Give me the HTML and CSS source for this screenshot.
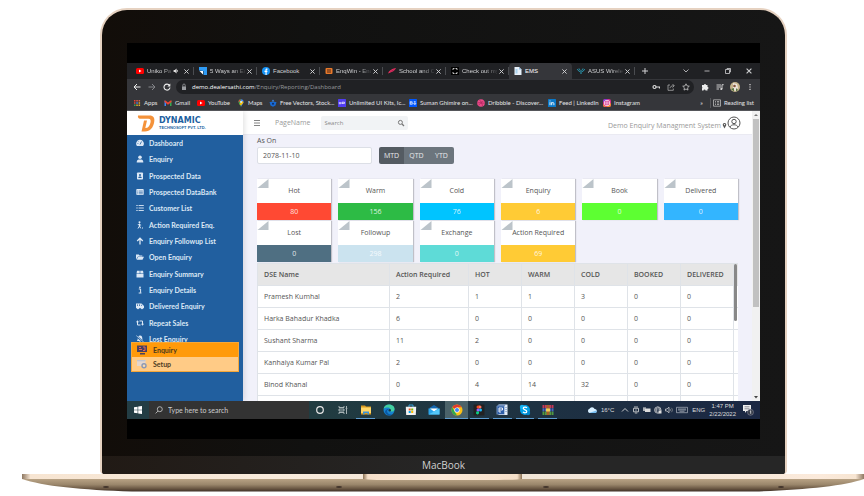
FILE: index.html
```html
<!DOCTYPE html>
<html lang="en">
<head>
<meta charset="utf-8">
<meta name="viewport" content="width=device-width, initial-scale=1">
<title>EMS</title>
<link rel="stylesheet" href="styles.css">
</head>
<body>
<svg class="sprite" aria-hidden="true">
  <symbol id="close" viewBox="0 0 8 8"><path d="M1.6 1.6l4.8 4.8M6.4 1.6L1.6 6.4" stroke="currentColor" stroke-width="1.1" fill="none"/></symbol>
  <symbol id="youtube" viewBox="0 0 16 12"><rect width="16" height="12" rx="3" fill="#f00"/><path d="M6 3l5 3-5 3z" fill="#fff"/></symbol>
  <symbol id="corner" viewBox="0 0 11 9"><path d="M0 9L11 0v9z" fill="#bcc4ca"/></symbol>
</svg>

<main class="laptop">
  <div class="lid">
    <div class="bezel">
      <div class="screen">

        <div class="tabs">
          <div class="tab"><svg class="fav" viewBox="0 0 16 16"><rect y="2" width="16" height="12" rx="3" fill="#f00"/><path d="M6 5l5 3-5 3z" fill="#fff"/></svg><span class="title">Uniko Pa</span><svg class="mute" viewBox="0 0 10 10"><path d="M1 3.500h2L6 1v8L3 6.500H1zM7 3c2 1 2 3 0 4" fill="#ddd"/></svg><svg class="x"><use href="#close"/></svg></div>
          <div class="tab"><svg class="fav" viewBox="0 0 16 16"><path d="M0 0h16v16H9V8L0 7z" fill="#2f9bf4"/><path d="M1 8h7v7z" fill="#fff"/></svg><span class="title">5 Ways an En</span><svg class="x"><use href="#close"/></svg></div>
          <div class="tab"><svg class="fav" viewBox="0 0 16 16"><circle cx="8" cy="8" r="8" fill="#1593f6"/><path d="M7 16v-6H5V7.500h2V6c0-2 1-3 4-2.700V5.500C9.500 5.400 9.300 5.700 9.300 6.500v1H11L10.600 10H9.300v6z" fill="#fff"/></svg><span class="title whole">Facebook</span><svg class="x"><use href="#close"/></svg></div>
          <div class="tab"><svg class="fav" viewBox="0 0 16 16"><rect x="1" y="2" width="14" height="12" rx="2" fill="#e8792b"/><path d="M4 5h8v2H4zM4 9h8v2H4z" fill="#4a2a1b"/></svg><span class="title">EnqWin - Enc</span><svg class="x"><use href="#close"/></svg></div>
          <div class="tab"><svg class="fav" viewBox="0 0 16 16"><path d="M0 13C2 7 7 4 16 2c-2 5-7 8-16 11z" fill="#ef3061"/><path d="M5 9l8-4" stroke="#7b1747"/></svg><span class="title">School and C</span><svg class="x"><use href="#close"/></svg></div>
          <div class="tab"><svg class="fav" viewBox="0 0 16 16"><rect width="16" height="16" rx="1"/><path d="M4 6V3h3M9 3h3v3M12 10v3H9M7 13H4v-3" fill="none" stroke="#fff" stroke-width="1.500"/></svg><span class="title">Check out my</span><svg class="x"><use href="#close"/></svg></div>
          <div class="tab active"><svg class="fav" viewBox="0 0 16 16"><path d="M1 0h9l5 5v11H1z" fill="#e8f1fa"/><path d="M10 0v5h5z" fill="#93bde0"/><path d="M3 4h4v9H3z" fill="#a9d3ee"/></svg><span class="title whole">EMS</span><svg class="x"><use href="#close"/></svg></div>
          <div class="tab"><svg class="fav" viewBox="0 0 16 16"><path d="M1 4c1 3 2 4 5 5M15 4c-1 3-2 4-5 5M4 3c1 2 2 3 3 4M12 3c-1 2-2 3-3 4M8 8v6" stroke="#29a3bd" stroke-width="2" fill="none"/></svg><span class="title">ASUS Wirele</span><svg class="x"><use href="#close"/></svg></div>
          <button class="plain new" aria-label="New tab"><svg viewBox="0 0 8 8"><path d="M4 1v6M1 4h6" stroke="currentColor"/></svg></button>
          <div class="window">
            <svg viewBox="0 0 8 8"><path d="M1.500 2.500L4 5l2.500-2.500" stroke="currentColor" fill="none" stroke-width=".8"/></svg>
            <svg viewBox="0 0 8 8"><path d="M1.500 4h5" stroke="currentColor" stroke-width=".8"/></svg>
            <svg viewBox="0 0 8 8"><path d="M1.500 2.500h4v4h-4zM3 2.500v-1h3.500V5h-1" stroke="currentColor" fill="none" stroke-width=".8"/></svg>
            <svg><use href="#close"/></svg>
          </div>
        </div>

        <div class="toolbar">
          <svg viewBox="0 0 8 8"><path d="M7.500 4H1M4 1L1 4l3 3" stroke="#eee" fill="none"/></svg>
          <svg viewBox="0 0 8 8"><path d="M.5 4H7M4 1l3 3-3 3" stroke="#85868a" fill="none"/></svg>
          <svg viewBox="0 0 8 8"><path d="M6.500 2.400A3 3 0 1 0 7 4.500" stroke="#eee" fill="none" stroke-width="1.100"/><path d="M7.300.6v3H4.400z" fill="#eee"/></svg>
          <div class="omnibox">
            <svg viewBox="0 0 8 8"><rect x="2" y="3.400" width="4" height="3.600" fill="#9a9ca0"/><path d="M2.800 3.500V2.200a1.200 1.200 0 0 1 2.400 0v1.300" stroke="#9a9ca0" stroke-width=".8" fill="none"/></svg>
            <span class="url"><b>demo.dealersathi.com</b>/Enquiry/Reporting/Dashboard</span>
            <svg viewBox="0 0 8 8"><circle cx="2.500" cy="4" r="1.500" fill="none" stroke="#ddd" stroke-width="1.200"/><path d="M4 4h3.500v1.500" stroke="#ddd" stroke-width="1.200" fill="none"/></svg>
            <svg viewBox="0 0 8 8"><path d="M3 2H1v5.300h5.300V5.500M3 5.200C3.200 3.500 4.400 2.700 7 2.800M5.500 1l1.800 1.800L5.500 4.500" stroke="#bbb" fill="none" stroke-width=".7"/></svg>
            <svg viewBox="0 0 8 8"><path d="M4 .8l1 2.100 2.300.3-1.700 1.600.4 2.300L4 6l-2 1.100.4-2.300L.7 3.200 3 2.900z" stroke="#ddd" fill="none" stroke-width=".7"/></svg>
          </div>
          <svg viewBox="0 0 8 8"><path d="M1 2h2a1 1 0 0 1 2 0h1.500v2a1 1 0 0 1 0 2v1.500h-2a1 1 0 0 0-2 0H1v-2a1 1 0 0 0 0-1.500z" fill="#eee"/></svg>
          <svg viewBox="0 0 8 8"><path d="M.5 2h4.500M.5 4h4.500M.5 6H3M6 6V1.700h1.700" stroke="#ddd" fill="none" stroke-width=".9"/><circle cx="5.300" cy="6" r="1.100" fill="#ddd"/></svg>
          <svg class="avatar" viewBox="0 0 10 10"><circle cx="5" cy="5" r="5" fill="#c6b48c"/><path d="M3 1l4 1 1 4-2 3-3-1z" fill="#eee4dc"/><circle cx="4.500" cy="4" r="1.300" fill="#82543c"/><path d="M1 7l3-1v3.500zM6 6l2 2-2 1.500z" fill="#587643"/></svg>
          <svg viewBox="0 0 8 8"><path d="M3.400 1h1.200v1.200H3.400zM3.400 3.400h1.200v1.200H3.400zM3.400 5.800h1.200V7H3.400z" fill="#ddd"/></svg>
        </div>

        <nav class="bookmarks" aria-label="Bookmarks">
          <a href="#"><svg viewBox="0 0 8 8"><path d="M1 1h1.500v1.500H1zM1 3.300h1.500v1.500H1z" fill="#ea4335"/><path d="M3.300 1h1.500v1.500H3.300zM5.600 1h1.500v1.500H5.600z" fill="#d8604c"/><path d="M3.300 3.300h1.500v1.500H3.300z" fill="#4285f4"/><path d="M5.600 3.300h1.500v1.500H5.600zM3.300 5.600h1.500v1.500H3.300zM5.600 5.600h1.500v1.500H5.600z" fill="#e5b02d"/><path d="M1 5.600h1.500v1.500H1z" fill="#34a853"/></svg>Apps</a>
          <a href="#"><svg viewBox="0 0 8 8"><path d="M.5 1.500L2 2.600V7H.5z" fill="#4285f4"/><path d="M7.500 1.500L6 2.600V7h1.500z" fill="#34a853"/><path d="M.5 1.500h1L4 3.500l2.500-2h1v1.600L4 5.700.5 3.100z" fill="#ea4335"/></svg>Gmail</a>
          <a href="#"><svg viewBox="0 -2 16 16"><use href="#youtube" width="16" height="12"/></svg>YouTube</a>
          <a href="#"><svg viewBox="0 0 8 8"><path d="M4 8C3.500 6 1.500 5 1.500 3A2.500 2.500 0 0 1 4 .3z" fill="#34a853"/><path d="M4 8c.5-2 2.500-3 2.500-5A2.500 2.500 0 0 0 4 .3z" fill="#4285f4"/><path d="M1.600 3.600L4 1l-1-.5C2 1 1.400 2 1.600 3.600z" fill="#ea4335"/><path d="M2.300 5L5.500 2l1 1.500L4 6.500z" fill="#fbbc04"/><circle cx="4" cy="2.900" r=".9" fill="#fff"/></svg>Maps</a>
          <a href="#"><svg viewBox="0 0 8 8"><path d="M.5 3h7L6.500 6.500 4 7.700 1.500 6.500z" fill="#1769d2"/><path d="M2.500 2.500L4 .5l1.500 2z" fill="#3b8cec"/><circle cx="4" cy="4.800" r="1" fill="#102c62"/></svg>Free Vectors, Stock...</a>
          <a href="#"><svg viewBox="0 0 8 8"><rect width="8" height="8" rx=".6" fill="#513df0"/><path d="M1.300 3v1.800h1.400V3M4 5V3.200h2.500v1.200H4" stroke="#fff" fill="none" stroke-width=".7"/></svg>Unlimited UI Kits, Ic...</a>
          <a href="#"><svg viewBox="0 0 8 8"><rect width="8" height="8" rx=".6" fill="#0057ff"/><path d="M1.200 2.500h1.500a.7.7 0 0 1 0 1.400h-1.500h1.700a.7.7 0 0 1 0 1.500H1.200zM7 4.700H4.700a1.100 1.100 0 1 1 2.200 0M4.900 5.200l1.600.4M4.800 2.500h1.900" stroke="#fff" fill="none" stroke-width=".6"/></svg>Suman Ghimire on...</a>
          <a href="#"><svg viewBox="0 0 8 8"><circle cx="4" cy="4" r="3.800" fill="#ea4c89"/><path d="M2.500 1c2 2 2.800 4 3 6M.5 3.800c3 0 5-1 6-2M1.500 6.500c1-2 3-3 6-2.200" stroke="#a51e57" fill="none" stroke-width=".6"/></svg>Dribbble - Discover...</a>
          <a href="#"><svg viewBox="0 0 8 8"><rect width="8" height="8" rx=".6" fill="#0a78c8"/><path d="M2 3.200v3M2 1.500v.9M3.700 6.200v-3M3.700 4.400c.5-1.200 2.200-1.200 2.200.2v1.600" stroke="#fff" fill="none" stroke-width=".9"/></svg>Feed | LinkedIn</a>
          <a href="#"><svg viewBox="0 0 8 8"><rect width="8" height="8" rx="2" fill="#d5318c"/><path d="M0 5l3 3H2a2 2 0 0 1-2-2zM3 8l5-4v2a2 2 0 0 1-2 2z" fill="#f6862f"/><path d="M0 3a3 3 0 0 1 3-3h2z" fill="#7a3cdb"/><rect x="1.500" y="1.500" width="5" height="5" rx="1.500" fill="none" stroke="#fff" stroke-width=".7"/><circle cx="4" cy="4" r="1.200" fill="none" stroke="#fff" stroke-width=".7"/></svg>Instagram</a>
          <span class="more">»</span>
          <a href="#" class="reading"><svg viewBox="0 0 8 8"><path d="M.5.8h7v6.400h-7zM2 2.500h1M4 2.500h2.200M2 4h1M4 4h2.200M2 5.500h1M4 5.500h2.200" stroke="#ccc" fill="none" stroke-width=".7"/></svg>Reading list</a>
        </nav>

        <div class="viewport">
          <aside class="sidebar">
            <div class="brand">
              <svg viewBox="0 0 18 17"><path d="M1 .5h11.500c4 0 5.500 2.500 4.700 6.500-.9 5.500-4 9.500-9.200 9.500H4.500L7 5.500h3L8.300 13c3 0 4.500-2 5.200-5.500.5-2.500 0-3.800-2-3.800H3C1.500 3.700.5 2.500 1 .5z" fill="#f4923a"/></svg>
              <div class="brand-text"><strong>DYNAMIC</strong><small>TECHNOSOFT PVT. LTD.</small></div>
            </div>
            <nav class="menu" aria-label="Main">
              <a href="#"><svg viewBox="0 0 8 8"><path d="M4 .8A3.800 3.800 0 0 0 1 7h6A3.800 3.800 0 0 0 4 .8z" fill="currentColor"/><path d="M4 5.500L5.500 2.500M1.500 4.500h.8M2.500 2.500l.4.4" stroke="#215f9f" stroke-width=".8"/></svg>Dashboard</a>
              <a href="#"><svg viewBox="0 0 8 8"><circle cx="4" cy="2.200" r="1.800" fill="currentColor"/><path d="M.7 7.500c0-2.300 1-3 2-3h2.600c1 0 2 .7 2 3z" fill="currentColor"/></svg>Enquiry</a>
              <a href="#"><svg viewBox="0 0 8 8"><rect x="1" y=".5" width="6" height="7" rx=".8" fill="currentColor"/><circle cx="4" cy="2.900" r="1" fill="#215f9f"/><path d="M2.300 5.900c0-1.800 3.400-1.800 3.400 0z" fill="#215f9f"/></svg>Prospected Data</a>
              <a href="#"><svg viewBox="0 0 8 8"><rect x=".3" y="1" width="7.400" height="6" rx=".8" fill="currentColor"/><path d="M1.300 3h1M3 3h3.800M1.300 4.400h1M3 4.400h3.800M1.300 5.800h1M3 5.800h3.800" stroke="#215f9f" stroke-width=".6"/></svg>Prospected DataBank</a>
              <a href="#"><svg viewBox="0 0 8 8"><path d="M.3 1.500h1.400M2.600 1.500h5.200M.3 4h1.400M2.600 4h5.200M.3 6.500h1.400M2.600 6.500h5.200" stroke="currentColor" stroke-width=".9"/></svg>Customer List</a>
              <a href="#"><svg viewBox="0 0 8 8"><circle cx="3.500" cy="1.200" r="1" fill="currentColor"/><path d="M3.500 2.500v2.500L2 7.500M3.500 5l1.200 2.300M1.800 3.600l3.300.5M6 7h1" stroke="currentColor" fill="none"/></svg>Action Required Enq.</a>
              <a href="#"><svg viewBox="0 0 8 8"><path d="M4 7.500V1.200M1.200 4L4 1.200 6.800 4" stroke="currentColor" stroke-width="1.300" fill="none"/></svg>Enquiry Followup List</a>
              <a href="#"><svg viewBox="0 0 8 8"><path d="M0 6.500V1.500h2.800l.8.900h2.700v1H2z" fill="currentColor"/><path d="M2.300 3.800H8L6.500 6.700H.6z" fill="currentColor"/></svg>Open Enquiry</a>
              <a href="#"><svg viewBox="0 0 8 8"><path d="M1 .8h2.700v2.700H.5zM4.300.8H7l.5 2.700H4.300zM.5 4h7v3.500h-7z" fill="currentColor"/></svg>Enquiry Summary</a>
              <a href="#"><svg viewBox="0 0 8 8"><circle cx="4" cy="1.300" r=".9" fill="currentColor"/><path d="M2.800 3h1.800v3.800M2.700 7h2.700" stroke="currentColor" fill="none"/></svg>Enquiry Details</a>
              <a href="#"><svg viewBox="0 0 8 8"><path d="M0 1.500h5.500L8 4v2.200H0z" fill="currentColor"/><path d="M1 2.500h1v1.200H1zM3 2.500h1v1.200H3zM5 2.500l1.300 1.200H5z" fill="#215f9f"/><circle cx="2" cy="6.200" r="1" fill="currentColor"/><circle cx="6" cy="6.200" r="1" fill="currentColor"/></svg>Delivered Enquiry</a>
              <a href="#"><svg viewBox="0 0 8 8"><path d="M1.500 2.500V6h3M6.500 5.500V2h-3" stroke="currentColor" fill="none"/><path d="M0 3.200l1.500-2 1.500 2zM5 4.800l1.500 2 1.500-2z" fill="currentColor"/></svg>Repeat Sales</a>
              <a href="#"><svg viewBox="0 0 8 8"><path d="M4 .5c2 0 2.300 1.500 2.300 3S7 5.500 7 6H1c0-.5.700-1 .7-2.500S2.500.5 4 .5zM3 6.500h2c0 1.300-2 1.300-2 0z" fill="currentColor"/><path d="M0 .8l8 6.700" stroke="#215f9f" stroke-width="1.800"/><path d="M.3.600l7.500 6.600" stroke="currentColor" stroke-width=".7"/></svg>Lost Enquiry</a>
            </nav>
            <div class="flyout">
              <a href="#"><svg viewBox="0 0 10 10"><path d="M0 .5h10v6.500H0zM3 8h5v1.500H3z" fill="#49405f"/><path d="M2 2.500h2M2 4.500h3M6 2h2v3.500H6" stroke="#e46658" fill="none"/></svg>Enquiry</a>
              <a href="#"><svg viewBox="0 0 10 10"><path d="M0 1h8.500v6H0z" fill="#e4d6cd"/><path d="M0 1h8.500v1.300H0z" fill="#bfc4d0"/><circle cx="7" cy="6.700" r="2" fill="#f7d9b0" stroke="#8b98b5" stroke-width="1.400"/></svg>Setup</a>
            </div>
          </aside>

          <section class="page">
            <header class="topbar">
              <svg class="burger" viewBox="0 0 8 8"><path d="M1 1.500h6M1 4h6M1 6.500h6" stroke="#777" stroke-width=".9"/></svg>
              <span class="pagename">PageName</span>
              <label class="search"><input type="text" placeholder="Search" aria-label="Search"><svg viewBox="0 0 8 8"><circle cx="3.400" cy="3.400" r="2" fill="none" stroke="#777"/><path d="M5 5l2 2" stroke="#777" stroke-width="1.200"/></svg></label>
              <span class="system">Demo Enquiry Managment System</span>
              <svg class="pin" viewBox="0 0 5 8"><path d="M2.500 7.500L.7 4A2 2 0 1 1 4.300 4z" fill="#555"/><circle cx="2.500" cy="3" r=".8" fill="#fff"/></svg>
              <svg class="user" viewBox="0 0 14 14"><circle cx="7" cy="7" r="6" fill="none" stroke="#555"/><circle cx="7" cy="5.500" r="2.200" fill="none" stroke="#555"/><path d="M3 11c1-3 7-3 8 0" fill="none" stroke="#555"/></svg>
            </header>

            <div class="content">
              <label class="ason" for="date">As On</label>
              <div class="filters">
                <input id="date" type="text" value="2078-11-10">
                <div class="group"><button class="on">MTD</button><button>QTD</button><button>YTD</button></div>
              </div>

              <div class="cards">
                <div class="card"><svg><use href="#corner"/></svg><h3>Hot</h3><p class="hot">80</p></div>
                <div class="card"><svg><use href="#corner"/></svg><h3>Warm</h3><p class="warm">156</p></div>
                <div class="card"><svg><use href="#corner"/></svg><h3>Cold</h3><p class="cold">76</p></div>
                <div class="card"><svg><use href="#corner"/></svg><h3>Enquiry</h3><p class="amber">6</p></div>
                <div class="card"><svg><use href="#corner"/></svg><h3>Book</h3><p class="book">0</p></div>
                <div class="card"><svg><use href="#corner"/></svg><h3>Delivered</h3><p class="delivered">0</p></div>
                <div class="card"><svg><use href="#corner"/></svg><h3>Lost</h3><p class="lost">0</p></div>
                <div class="card"><svg><use href="#corner"/></svg><h3>Followup</h3><p class="followup">298</p></div>
                <div class="card"><svg><use href="#corner"/></svg><h3>Exchange</h3><p class="exchange">0</p></div>
                <div class="card"><svg><use href="#corner"/></svg><h3>Action Required</h3><p class="amber">69</p></div>
              </div>

              <div class="report">
                <table>
                  <colgroup><col class="c-name"><col class="c-action"><col class="c-num"><col class="c-num"><col class="c-num"><col class="c-num"><col class="c-num"><col></colgroup>
                  <thead><tr><th>DSE Name</th><th>Action Required</th><th>HOT</th><th>WARM</th><th>COLD</th><th>BOOKED</th><th>DELIVERED</th><td></td></tr></thead>
                  <tbody>
                    <tr><td>Pramesh Kumhal</td><td>2</td><td>1</td><td>1</td><td>3</td><td>0</td><td>0</td><td></td></tr>
                    <tr><td>Harka Bahadur Khadka</td><td>6</td><td>0</td><td>0</td><td>0</td><td>0</td><td>0</td><td></td></tr>
                    <tr><td>Sushant Sharma</td><td>11</td><td>2</td><td>0</td><td>0</td><td>0</td><td>0</td><td></td></tr>
                    <tr><td>Kanhaiya Kumar Pal</td><td>2</td><td>0</td><td>0</td><td>0</td><td>0</td><td>0</td><td></td></tr>
                    <tr><td>Binod Khanal</td><td>0</td><td>4</td><td>14</td><td>32</td><td>0</td><td>0</td><td></td></tr>
                    <tr><td></td><td></td><td></td><td></td><td></td><td></td><td></td><td></td></tr>
                  </tbody>
                </table>
                <span class="report-thumb"></span>
              </div>
            </div>
          </section>

          <div class="scrollbar">
            <svg viewBox="0 0 8 8"><path d="M2 5l2-2 2 2z" fill="#777"/></svg>
            <span></span>
            <svg viewBox="0 0 8 8"><path d="M2 3l2 2.500L6 3z" fill="#444"/></svg>
          </div>
        </div>

        <div class="taskbar">
          <button class="plain start" aria-label="Start"><svg viewBox="0 0 8 8"><path d="M0 1.200l3.600-.5v3H0zM4.200.600L8 0v3.700H4.200zM0 4.300h3.600v3L0 6.800zM4.200 4.300H8V8l-3.800-.6z" fill="#fff"/></svg></button>
          <label class="find"><svg viewBox="0 0 8 8"><circle cx="4.800" cy="3.200" r="2.500" fill="none" stroke="#ccc" stroke-width=".8"/><path d="M3 5L.6 7.400" stroke="#ccc" stroke-width=".8"/></svg><input type="text" placeholder="Type here to search" aria-label="Type here to search"></label>
          <div class="apps">
            <span><svg viewBox="0 0 12 12"><circle cx="6" cy="6" r="3.300" fill="none" stroke="#e8e8e8" stroke-width="1.200"/></svg></span>
            <span><svg viewBox="0 0 12 12"><path d="M2 2v1.500h5V2M2 10V8.500h5V10M2 5h5v2H2zM9.500 2v2M9.500 5v5M8.700 4.500h1.600" fill="none" stroke="#c8d0d2" stroke-width=".8"/></svg></span>
            <span class="open"><svg viewBox="0 0 12 12"><path d="M1 1.500h4l1 1h5v8H1z" fill="#d99b20"/><path d="M1 3.500h10V9H1z" fill="#ffd667"/><path d="M3 10.500V7.500h6v3H7.500V9h-3v1.500z" fill="#3b93d8"/></svg></span>
            <span><svg viewBox="0 0 12 12"><circle cx="6" cy="6" r="5.500" fill="#1683cf"/><path d="M.6 5C1 2 3 .5 6 .5c3.500 0 6 2.500 5.500 5C11 8 8 8 7 7c1-1.500 0-3.500-2.500-3.500C2.500 3.500 1 4 .6 5z" fill="#42cfa0"/><path d="M4 7c0 2 2 4 5.500 3.500-4 2.500-9-.5-7-4 1-1.500 2.500-2 4-1C5 5.500 4 6 4 7z" fill="#0a59a5"/><circle cx="6.800" cy="6.300" r="1.200" fill="#183945"/></svg></span>
            <span><svg viewBox="0 0 12 12"><path d="M4 3V1h4v2" fill="none" stroke="#35a8e5" stroke-width=".9"/><path d="M.8 2.800h10.400L10.800 11H1.200z" fill="#f1f1f1"/><path d="M3.700 4.500h2v2h-2z" fill="#f25022"/><path d="M6.200 4.500h2v2h-2z" fill="#7fba00"/><path d="M3.700 7h2v2h-2z" fill="#00a4ef"/><path d="M6.200 7h2v2h-2z" fill="#ffb900"/></svg></span>
            <span><svg viewBox="0 0 12 12"><path d="M.5 4.500L6 1l5.500 3.500z" fill="#1467b0"/><path d="M.5 4.500h11v6H.5z" fill="#2aa4ea"/><path d="M2 4.500h8L6 7.500z" fill="#fff"/><path d="M.5 10.500l11-6v6z" fill="#54c8fa"/></svg></span>
            <span class="open current"><svg viewBox="0 0 12 12"><circle cx="6" cy="6" r="5.500" fill="#fbc116"/><path d="M6 6L1.200 3.300A5.500 5.500 0 0 1 10.800 3.300H6z" fill="#e33b2e"/><path d="M1.200 3.300L4 8l2 3.500A5.500 5.500 0 0 1 1.200 3.300z" fill="#2da94f"/><circle cx="6" cy="6" r="2.600" fill="#fff"/><circle cx="6" cy="6" r="2" fill="#4285f4"/></svg></span>
            <span class="open"><svg viewBox="0 0 12 12"><rect x=".5" y=".5" width="11" height="11" rx="1" fill="#222"/><path d="M6 1.500H5a1.500 1.500 0 0 0 0 3h1z" fill="#f24e1e"/><path d="M6 1.500h1a1.500 1.500 0 0 1 0 3H6z" fill="#ff7262"/><path d="M6 4.500H5a1.500 1.500 0 0 0 0 3h1z" fill="#a259ff"/><circle cx="7.500" cy="6" r="1.500" fill="#1abcfe"/><path d="M6 7.500H5A1.500 1.500 0 1 0 6 9z" fill="#0acf83"/></svg></span>
            <span class="open"><svg viewBox="0 0 12 12"><path d="M2.500.5h9v10.500h-9z" fill="#e3edf8"/><path d="M.5 2L3 .5h7L8.500 2v8.500h-8z" fill="#6e8fbd"/><path d="M1.500 2.500H8V10H1.500z" fill="#2d5ea8"/><path d="M3 4h3.500M3 6h3.500M3 8h2M3 4v4M6.500 4v2" stroke="#fff" fill="none" stroke-width=".9"/><path d="M9.300 3.500h1.500M9.300 5.500h1.500M9.300 7.500h1.500" stroke="#658dbf" stroke-width=".7"/></svg></span>
            <span class="open"><svg viewBox="0 0 12 12"><circle cx="6" cy="6" r="5" fill="#00a1e8"/><circle cx="3" cy="3" r="2.200" fill="#13b4f5"/><circle cx="9" cy="9" r="2.200" fill="#0089d0"/><path d="M8 4C7 2.700 4.200 3 4.300 4.500S7.800 5.700 7.800 7.400 5 9.200 4 7.900" stroke="#fff" fill="none" stroke-width="1.200"/></svg></span>
            <span class="open"><svg viewBox="0 0 12 12"><path d="M.5 1h11v3.200H.5z" fill="#c13b5b"/><path d="M.5 4.300h11v3.200H.5z" fill="#416ac0"/><path d="M.5 7.600h11V11H.5z" fill="#4e9b44"/><path d="M2.500 1v10M9.500 1v10" stroke="#33222d" stroke-width=".5"/><path d="M4.500 1h3v10h-3z" fill="#a5602b"/><path d="M4 4.500h4v3H4z" fill="#f1cd57"/></svg></span>
          </div>
          <div class="tray">
            <svg class="cloud" viewBox="0 0 10 8"><path d="M2.500 7a2.200 2.200 0 0 1 0-4.200A2.800 2.800 0 0 1 7.600 3 2 2 0 0 1 8 7z" fill="#d8efff"/><path d="M2 7h6.500a2 2 0 0 0 1-2.500z" fill="#76bdf2"/></svg>
            <span class="temp">16°C</span>
            <svg viewBox="0 0 8 8"><path d="M1 5.500L4 2.500l3 3" stroke="#ddd" fill="none" stroke-width=".9"/></svg>
            <svg viewBox="0 0 8 8"><path d="M2 1h4M1.500 2.300h5v3.500h-5zM4 3.300v1.500M2.800 7h2.500" stroke="#ddd" fill="none" stroke-width=".8"/></svg>
            <svg viewBox="0 0 8 8"><path d="M2 2.500h5.500v3.500H2z" fill="#ddd"/><path d="M0 2h3M0 4h2.500M1 2v3" stroke="#ddd"/></svg>
            <svg viewBox="0 0 8 8"><circle cx="3.800" cy="4" r="3.200" stroke="#ddd" fill="none" stroke-width=".7"/><path d="M.6 3h6.400M.6 5h3M3.800.8c-2 2-2 4.500 0 6.400M3.800.8c1.500 1 1.800 2.500 1.700 3.500" stroke="#ddd" fill="none" stroke-width=".6"/><rect x="4.500" y="4.500" width="3" height="3" fill="#ddd"/></svg>
            <svg viewBox="0 0 8 8"><path d="M.5 3h1.500L4 1.200v5.600L2 5H.5z" fill="none" stroke="#ddd" stroke-width=".7"/><path d="M5 2.800c.8.7.8 1.700 0 2.400M6.300 1.800c1.400 1.200 1.400 3.200 0 4.400" fill="none" stroke="#aaa" stroke-width=".6"/></svg>
            <svg class="kb" viewBox="0 0 12 8"><path d="M.5 1.300h11v5.400H.5zM2 3h8M2 4h8M3.500 5.300h5" fill="none" stroke="#c7ccd5" stroke-width=".6"/></svg>
            <span class="lang">ENG</span>
            <span class="clock">1:47 PM<br>2/22/2022</span>
            <svg class="note" viewBox="0 0 12 12"><path d="M1 1h8v6H4.500L3 9V7H1z" fill="#eee"/><path d="M2.500 2.800h5M2.500 4.800h5" stroke="#445" stroke-width=".6"/><circle cx="8.500" cy="8.300" r="3" fill="#353b48" stroke="#99a" stroke-width=".5"/><path d="M7.900 7.300l.8-.5v3" stroke="#fff" stroke-width=".7" fill="none"/></svg>
          </div>
        </div>
      </div>
    </div>
    <div class="chin">MacBook</div>
  </div>

  <svg class="base" viewBox="0 0 842 19" preserveAspectRatio="none" aria-hidden="true">
    <defs>
      <linearGradient id="metal" x1="0" y1="0" x2="0" y2="1"><stop offset="0" stop-color="#b8a284"/><stop offset=".45" stop-color="#9a866b"/><stop offset=".8" stop-color="#65523f"/><stop offset="1" stop-color="#3f3027"/></linearGradient>
      <linearGradient id="deck" x1="0" x2="1"><stop offset="0" stop-color="#8e7862"/><stop offset=".01" stop-color="#f7e5d2"/><stop offset=".3" stop-color="#f8eadb"/><stop offset=".6" stop-color="#f1e5d7"/><stop offset=".95" stop-color="#fbeadb"/><stop offset=".99" stop-color="#f7e5d2"/><stop offset="1" stop-color="#8e7862"/></linearGradient>
      <linearGradient id="notch" x1="0" x2="1"><stop offset="0" stop-color="#8d7355"/><stop offset=".03" stop-color="#f5dfc9"/><stop offset=".5" stop-color="#fae8d7"/><stop offset=".97" stop-color="#f5dfc9"/><stop offset="1" stop-color="#8d7355"/></linearGradient>
    </defs>
    <path d="M0 5C20 12 60 16 110 17.500H732C782 16 822 12 842 5z" fill="url(#metal)"/>
    <path d="M0 0H842V5H0z" fill="url(#deck)"/>
    <path d="M341 0H500V5C495 6 480 6 460 6H380C360 6 346 6 341 5z" fill="url(#notch)"/>
    <g fill="#43352c"><ellipse cx="84" cy="13" rx="3" ry="1"/><ellipse cx="317" cy="13" rx="3" ry="1"/><ellipse cx="524" cy="13" rx="3" ry="1"/><ellipse cx="759" cy="13" rx="3" ry="1"/></g>
  </svg>
</main>
</body>
</html>
```
FILE: styles.css
```css
* { box-sizing: border-box; }
body {
  margin: 0;
  padding: 8px 0 0 22px;
  background: #fff;
  font-family: "Open Sans", "Noto Sans", sans-serif;
  font-size: 7px;
  line-height: 10px;
  color: #555;
}
a { color: inherit; text-decoration: none; }
svg { display: block; flex: none; width: 8px; height: 8px; }
input, button { font: inherit; color: inherit; border: 0; margin: 0; padding: 0; background: none; }
.sprite { position: absolute; width: 0; height: 0; }

/* Laptop shell */
.lid {
  margin: 0 77px 0 78px;
  border: 2px solid #e6d2c1;
  border-bottom: 0;
  border-radius: 27px 27px 4px 4px;
  overflow: hidden;
  background: linear-gradient(90deg, #120d09, #111110 30%, #161616);
}
.bezel { padding: 33px 25px 17px; }
.screen { background: #000; padding: 20px 0; }
.chin {
  background: linear-gradient(90deg, #211a15, #262626 50%);
  color: #d0d0d0;
  font-size: 10px;
  line-height: 18px;
  text-align: center;
  height: 18px;
}
.base { width: 100%; height: 19px; }

/* Browser chrome */
.tabs, .toolbar, .bookmarks, .taskbar { font-family: Lato, "Open Sans", sans-serif; font-size: 6px; }
.tabs { display: flex; height: 16px; padding-left: 4px; background: #202124; color: #d0d1d3; font-family: "Liberation Sans", sans-serif; }
.tab { display: flex; align-items: center; flex: 0 1 63px; min-width: 0; padding: 0 4px 0 5px; position: relative; }
.tab::after { content: ""; position: absolute; right: 0; top: 4px; height: 8px; border-right: 1px solid #4a4c50; }
.tab.active { background: #35363a; border-radius: 4px 4px 0 0; }
.tab.active::after { border: 0; }
.title { flex: 1; min-width: 0; margin-left: 3px; white-space: nowrap; mask-image: linear-gradient(90deg, #000 65%, #0002); }
.title.whole { mask-image: none; }
.active .title { color: #fff; }
.mute { width: 6px; height: 6px; margin: 0 3px 0 1px; }
.x { width: 7px; height: 7px; margin-left: 1px; }
.plain { display: flex; align-items: center; justify-content: center; }
.new { width: 20px; }
.window { display: flex; align-items: center; gap: 13px; margin-left: auto; padding-right: 7px; }
.toolbar { display: flex; align-items: center; gap: 7px; height: 16px; padding: 0 6px; background: #35363a; }
.omnibox { display: flex; align-items: center; gap: 7px; flex: 1; height: 14px; padding: 0 4px 0 4px; border-radius: 7px; background: #202124; color: #97999d; margin: 0 0 0 -2px; }
.omnibox svg:first-child { margin-right: -3px; }
.url { flex: 1; white-space: nowrap; font-family: "Open Sans", sans-serif; }
.url b { font-weight: 400; color: #fff; }
.avatar { width: 10px; height: 10px; margin: 0 -1px; }
.bookmarks {
  display: grid;
  grid-template-columns: 31px 33px 40px 32px 69px 71px 68px 71px 55px 50px 1fr auto;
  align-items: center;
  height: 16px;
  padding: 0 6px;
  background: #35363a;
  border-bottom: 1px solid #55565a;
  color: #e4e5e7;
}
.bookmarks a { display: flex; align-items: center; gap: 3px; white-space: nowrap; }
.more { text-align: right; padding-right: 7px; }
.bookmarks .reading { border-left: 1px solid #55565a; padding-left: 2px; }

/* Web page inside the browser */
.viewport { display: flex; height: 290px; overflow: hidden; background: #f1f1fa; }
.sidebar { position: relative; flex: 0 0 116px; background: #215f9f; color: #dce8f5; box-shadow: 1px 0 6px #0002; z-index: 1; }
.brand { display: flex; align-items: center; gap: 4px; height: 24px; padding-left: 10px; background: #fff; color: #215f9f; }
.brand svg { width: 18px; height: 17px; }
.brand-text { display: flex; flex-direction: column; }
.brand strong { font: bold 8px/8px "DejaVu Sans", sans-serif; }
.brand small { font: bold 4px/5px "Liberation Sans", sans-serif; white-space: nowrap; }
.menu { display: flex; flex-direction: column; height: 212px; font-family: Lato, sans-serif; font-weight: 700; }
.menu a { display: flex; flex: 1; align-items: center; gap: 5px; padding-left: 9px; }
.flyout { position: absolute; left: 4px; right: 4px; top: 231px; border: 1px solid #f5a83a; background: #ffcb86; color: #4d3a1f; font-family: Lato, sans-serif; font-weight: 700; }
.flyout a { display: flex; align-items: center; gap: 6px; height: 14px; padding-left: 5px; }
.flyout a:first-child { background: #ff9a0a; }
.flyout svg { width: 10px; height: 10px; }

.page { flex: 1; min-width: 0; }
.topbar { display: flex; align-items: center; height: 24px; padding: 0 11px 0 10px; background: #fff; border-bottom: 1px solid #eaeaf2; color: #999; }
.pagename { margin-left: 14px; }
.search { display: flex; align-items: center; width: 87px; height: 14px; margin-left: 11px; padding: 0 3px; border-radius: 2px; background: #f1f3f5; }
.search input { flex: 1; min-width: 0; font-size: 6px; }
.search input::placeholder { color: #888; }
.system { margin-left: auto; padding-top: 7px; white-space: nowrap; }
.pin { width: 5px; height: 7px; margin: 6px 0 0 1px; }
.user { width: 14px; height: 14px; }

.content { padding: 1px 14px 0; }
.ason { display: block; }
.filters { display: flex; gap: 7px; margin-top: 1px; }
.filters input { width: 115px; height: 17px; padding: 0 5px; border: 1px solid #dcdfe6; border-radius: 2px; background: #fff; }
.group { display: flex; border-radius: 2px; overflow: hidden; }
.group button { width: 25px; background: #6c757d; color: #e8eaec; font-size: 7px; }
.group .on { background: #545b62; }

.cards { display: grid; grid-template-columns: repeat(6, 1fr); gap: 1px 7px; margin-top: 15px; }
.card { position: relative; background: #fff; box-shadow: 1px 0 1px #0003; text-align: center; }
.card svg { position: absolute; left: 0; top: 0; width: 12px; height: 9px; }
.card h3, .card p { margin: 0; font-size: 7px; font-weight: 400; }
.card h3 { line-height: 24px; }
.card p { line-height: 17px; color: #ffffffd9; }
.hot { background: #ff4933; }
.warm { background: #2dbb45; }
.cold { background: #00c4ff; }
.amber { background: #ffcb35; }
.book { background: #5dff32; }
.delivered { background: #33b5ff; }
.lost { background: #4f6f82; }
.followup { background: #cbe3ef; }
.exchange { background: #5edbd7; }

.report { position: relative; margin-top: 1px; }
table { width: 100%; table-layout: fixed; border-collapse: collapse; background: #fff; }
tr { height: 22px; }
.c-name { width: 132px; }
.c-action { width: 79px; }
.c-num { width: 53px; }
th, td { padding: 0 6px; border: 1px solid #dfe3e8; text-align: left; white-space: nowrap; }
td:last-child { padding: 0; border-right: 0; }
th, thead td { background: #e6e6e6; font-weight: 600; }
.report-thumb { position: absolute; right: 1px; top: 1px; width: 3px; height: 57px; border-radius: 2px; background: #888; }
.scrollbar { display: flex; flex-direction: column; flex: 0 0 8px; background: #f1f1f1; }
.scrollbar span { flex: none; height: 188px; margin: 0 1px; background: #c1c1c1; }
.scrollbar svg:last-child { margin-top: auto; }

/* Windows taskbar */
.taskbar { display: flex; height: 18px; background: linear-gradient(90deg, #213c41 30%, #1b2743); color: #ddd; }
.start { width: 22px; background: #233d44; }
.find { display: flex; align-items: center; gap: 5px; width: 160px; padding-left: 6px; background: #333; font-size: 7px; }
.find input { flex: 1; min-width: 0; }
.find input::placeholder { color: #ccc; opacity: 1; }
.apps { display: grid; grid-template-columns: repeat(11, 1fr); width: 250px; }
.apps span { display: flex; align-items: center; justify-content: center; margin: 0 2px; border-bottom: 1px solid transparent; }
.apps svg { width: 12px; height: 12px; }
.apps .open { border-color: #5d9ccf; }
.apps .current { background: #4b636a; margin: 0; }
.tray { display: flex; align-items: center; gap: 3px; margin-left: auto; padding-right: 6px; font-family: "Liberation Sans", sans-serif; }
.cloud { width: 10px; }
.temp { margin: 0 4px 0 1px; }
.kb { width: 12px; }
.lang { margin-left: 1px; }
.clock { line-height: 8px; text-align: center; margin: 0 3px 0 1px; }
.note { width: 12px; height: 12px; }
```
